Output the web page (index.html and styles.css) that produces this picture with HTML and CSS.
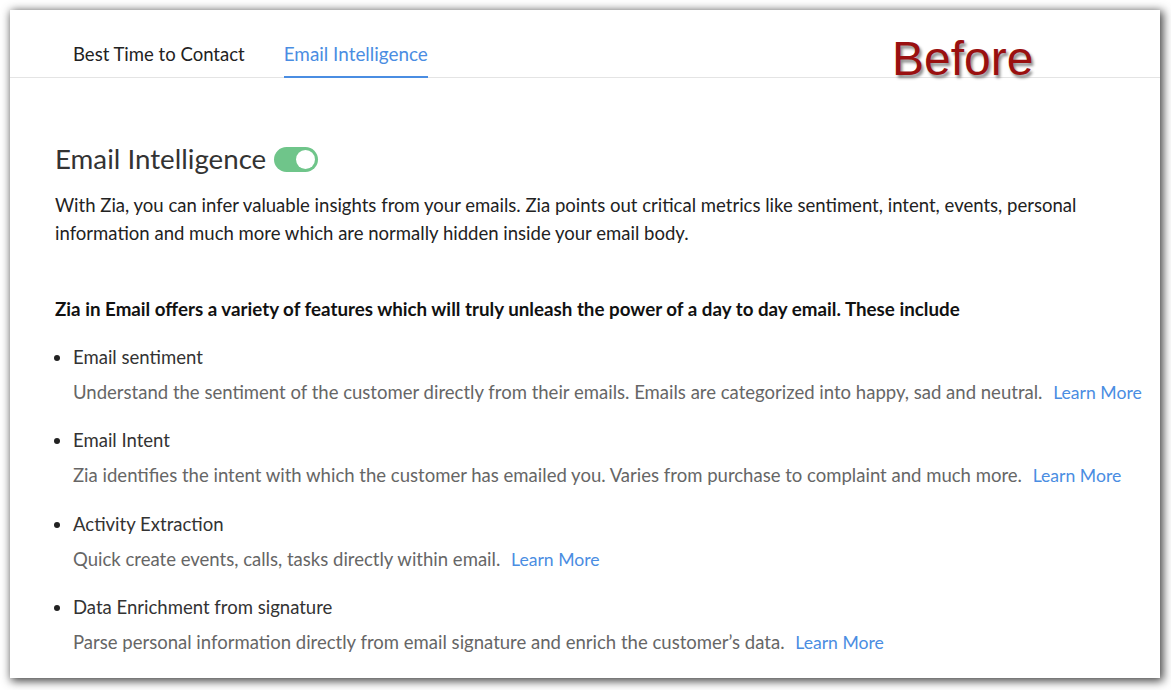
FILE: index.html
```html
<!DOCTYPE html>
<html>
<head>
<meta charset="utf-8">
<link rel="stylesheet" href="styles.css">
</head>
<body>
<div class="panel">
  <div class="tabs">
    <div class="tab">Best Time to Contact</div>
    <div class="tab active">Email Intelligence</div>
  </div>
  <div class="stamp">Before</div>
  <div class="content">
    <div class="heading">
      <h1>Email Intelligence</h1>
      <span class="toggle"><span class="knob"></span></span>
    </div>
    <p class="intro">With Zia, you can infer valuable insights from your emails. Zia points out critical metrics like sentiment, intent, events, personal information and much more which are normally hidden inside your email body.</p>
    <p class="lead">Zia in Email offers a variety of features which will truly unleash the power of a day to day email. These include</p>
    <ul class="features">
      <li>
        <div class="title">Email sentiment</div>
        <div class="desc">Understand the sentiment of the customer directly from their emails. Emails are categorized into happy, sad and neutral. <a class="more">Learn More</a></div>
      </li>
      <li>
        <div class="title">Email Intent</div>
        <div class="desc">Zia identifies the intent with which the customer has emailed you. Varies from purchase to complaint and much more. <a class="more">Learn More</a></div>
      </li>
      <li>
        <div class="title">Activity Extraction</div>
        <div class="desc">Quick create events, calls, tasks directly within email. <a class="more">Learn More</a></div>
      </li>
      <li>
        <div class="title">Data Enrichment from signature</div>
        <div class="desc">Parse personal information directly from email signature and enrich the customer’s data. <a class="more">Learn More</a></div>
      </li>
    </ul>
  </div>
</div>
</body>
</html>
```

FILE: styles.css
```css
html, body {
  margin: 0;
  padding: 0;
  background: #ffffff;
}
body {
  font-family: Lato, "Open Sans", sans-serif;
  color: #222;
  width: 1171px;
  height: 690px;
  overflow: hidden;
}
.panel {
  position: relative;
  margin: 10px 0 0 10px;
  width: 1150px;
  height: 668px;
  background: #fff;
  box-shadow: 2px 2px 9px 1px rgba(0,0,0,0.75);
  overflow: hidden;
}
.tabs {
  display: flex;
  gap: 39px;
  padding-left: 63px;
  height: 68px;
  border-bottom: 1px solid #e4e4e4;
  box-sizing: border-box;
}
.tab {
  font-size: 18.55px;
  color: #222;
  line-height: 24px;
  padding-top: 32px;
  box-sizing: border-box;
  height: 68px;
  border-bottom: 2px solid transparent;
}
.tab.active {
  color: #4a8de2;
  border-bottom-color: #4a8de2;
  font-size: 18.9px;
}
.stamp {
  position: absolute;
  left: 882px;
  top: 21px;
  font-family: "Liberation Sans", Arial, sans-serif;
  font-size: 48px;
  color: #9a1010;
  text-shadow: 2px 3px 3px rgba(0,0,0,0.45);
}
.content {
  padding: 63px 0 0 45px;
}
.heading {
  display: flex;
  align-items: center;
  gap: 8px;
  height: 36px;
}
h1 {
  margin: 0;
  font-weight: 400;
  font-size: 27.7px;
  line-height: 36px;
  color: #333;
}
.toggle {
  display: flex;
  align-items: center;
  justify-content: flex-end;
  width: 44px;
  height: 25px;
  border-radius: 13px;
  background: #6fc58a;
  padding: 0 3px;
  box-sizing: border-box;
  margin-top: 1px;
}
.knob {
  width: 19px;
  height: 19px;
  border-radius: 50%;
  background: #fff;
}
.intro {
  margin: 14px 0 0;
  font-size: 18.55px;
  line-height: 28px;
  color: #222;
  width: 1060px;
}
.lead {
  margin: 48px 0 0;
  font-size: 18.75px;
  font-weight: 700;
  line-height: 28px;
  color: #111;
}
.features {
  margin: 20px 0 0;
  padding: 0 0 0 18px;
  font-size: 18.55px;
}
.features li {
  margin-bottom: 20.33px;
}
.title {
  line-height: 28px;
  height: 28px;
  color: #333;
}
.desc {
  margin-top: 7px;
  line-height: 28px;
  height: 28px;
  color: #666;
}
.more {
  color: #4a8de2;
  margin-left: 6px;
  font-size: 17.6px;
  line-height: 20px;
}
```
